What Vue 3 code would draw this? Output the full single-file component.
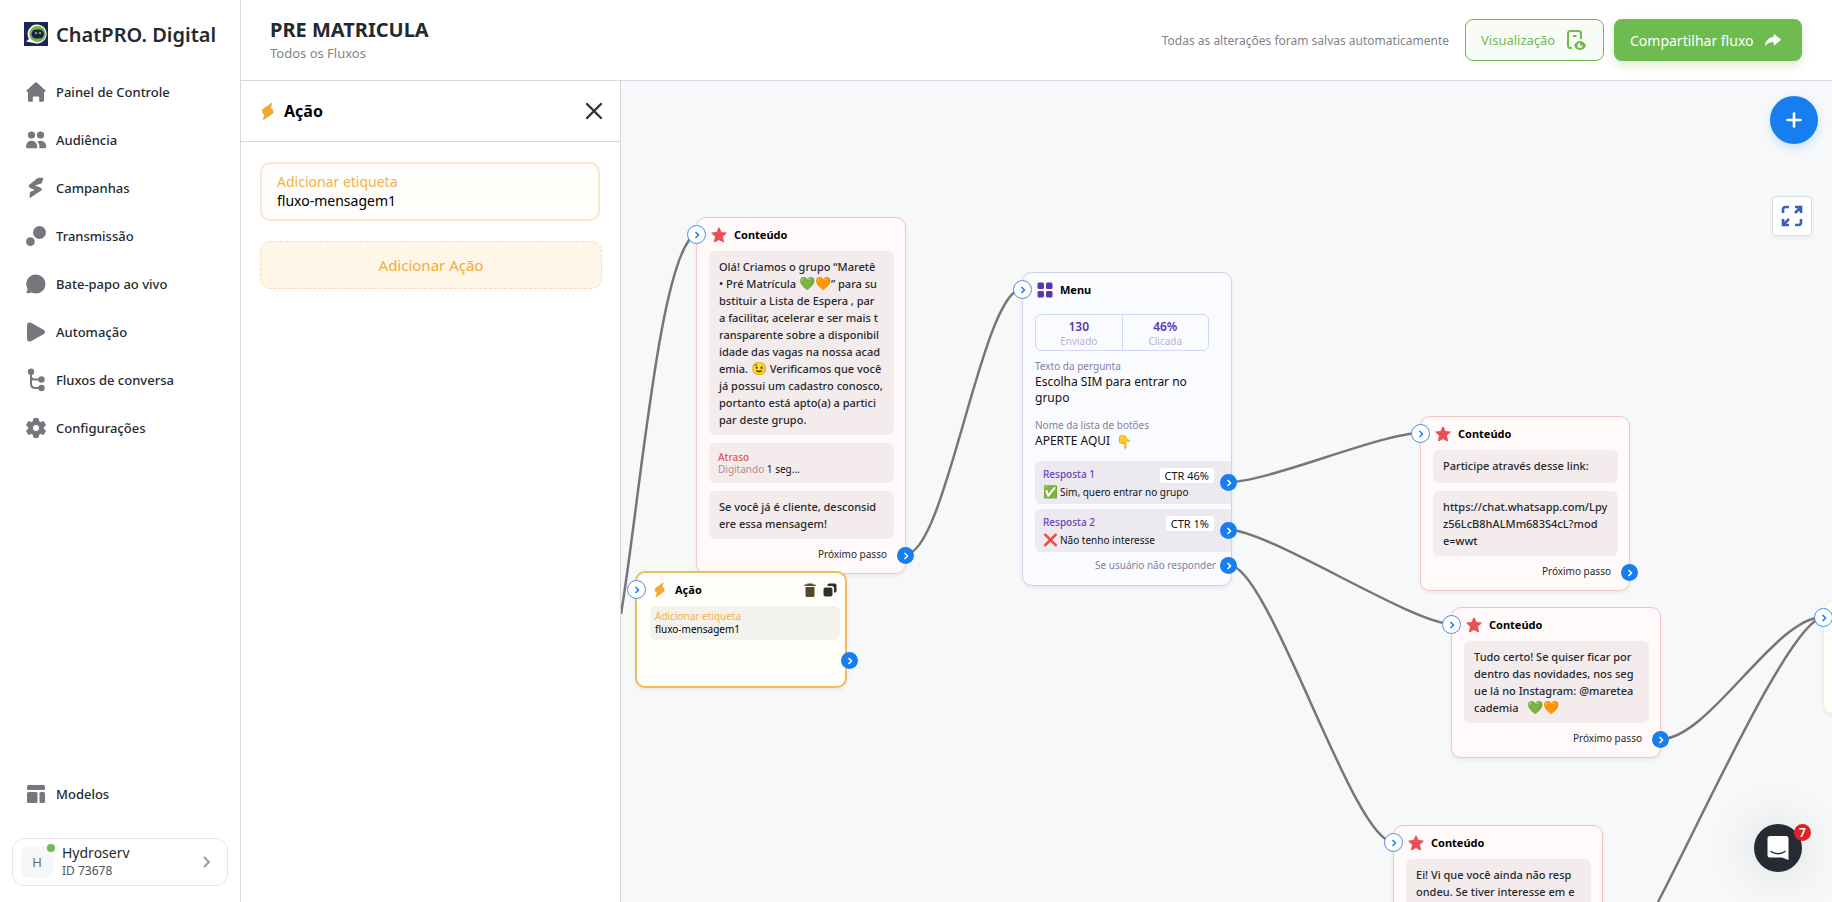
<script setup>
const nav = [
  { label: 'Painel de Controle', icon: 'home' },
  { label: 'Audiência', icon: 'people' },
  { label: 'Campanhas', icon: 'campaign' },
  { label: 'Transmissão', icon: 'broadcast' },
  { label: 'Bate-papo ao vivo', icon: 'chat' },
  { label: 'Automação', icon: 'play' },
  { label: 'Fluxos de conversa', icon: 'flow' },
  { label: 'Configurações', icon: 'gear' },
]

const contents = [
  {
    id: 'c1',
    next: true,
    blocks: [
      {
        text:
          'Olá! Criamos o grupo “Maretê\n• Pré Matrícula 💚🧡” para su\nbstituir a Lista de Espera , par\na facilitar, acelerar e ser mais t\nransparente sobre a disponibil\nidade das vagas na nossa acad\nemia. 😉 Verificamos que você\njá possui um cadastro conosco,\nportanto está apto(a) a partici\npar deste grupo.',
      },
      { delay: '1 seg...' },
      { text: 'Se você já é cliente, desconsid\nere essa mensagem!' },
    ],
  },
  {
    id: 'c2',
    next: true,
    blocks: [
      { text: 'Participe através desse link:' },
      { text: 'https://chat.whatsapp.com/Lpy\nz56LcB8hALMm683S4cL?mod\ne=wwt' },
    ],
  },
  {
    id: 'c3',
    next: true,
    blocks: [
      { text: 'Tudo certo! Se quiser ficar por\ndentro das novidades, nos seg\nue lá no Instagram: @maretea\ncademia   💚🧡' },
    ],
  },
  {
    id: 'c4',
    next: false,
    blocks: [
      { text: 'Ei! Vi que você ainda não resp\nondeu. Se tiver interesse em e' },
    ],
  },
]

// Splits a line so that emoji runs can be set larger than the words.
const parts = (line) =>
  line
    .split(/((?:💚|🧡|😉)+)/u)
    .map((t, i) => ({ t, emoji: i % 2 === 1 }))
    .filter((p) => p.t)

const answers = [
  { label: 'Resposta 1', mark: '✅', text: 'Sim, quero entrar no grupo', ctr: 'CTR 46%' },
  { label: 'Resposta 2', mark: '❌', text: 'Não tenho interesse', ctr: 'CTR 1%' },
]

const edges = [
  'M0 533 C19 419 39 169 75 153',
  'M285 473 C325 473 361 208 401 208',
  'M608 401 C648 401 760 352 800 352',
  'M608 449 C648 449 791 543 831 543',
  'M608 484 C648 484 732 761 772 761',
  'M1040 658 C1088 658 1154 536 1202 536',
  'M1037 821 C1084 731 1169 541 1202 536',
]
</script>

<template>
  <div class="app">
    <aside class="sidebar">
      <div class="brand">
        <svg class="logo" viewBox="0 0 24 24" aria-hidden="true">
          <rect width="24" height="24" fill="#1f2457" />
          <path d="M2 19.500L5 17A9.500 9.500 0 1 1 10 21Z" fill="#fff" />
          <circle cx="13.500" cy="12" r="8.200" fill="#76b947" />
          <rect x="7.500" y="7.500" width="12.500" height="9" rx="4.500" fill="#1b2150" />
          <circle cx="12" cy="11" r="1.200" fill="#76b947" />
          <circle cx="16" cy="11" r="1.200" fill="#76b947" />
        </svg>
        <span>ChatPRO. Digital</span>
      </div>
      <nav class="nav">
        <a v-for="n in nav" :key="n.icon" href="#" class="nav-item">
          <svg class="nav-icon" viewBox="0 0 24 24" aria-hidden="true">
            <path v-if="n.icon === 'home'" d="M12 2.300c.6 0 1 .2 1.400.6l7.800 7.300c.7.700.3 1.800-.7 1.800H20v8.300c0 .9-.6 1.500-1.500 1.500h-3.300v-4.300c0-.7-.4-1-1-1H9.800c-.6 0-1 .3-1 1v4.300H5.500c-.9 0-1.500-.6-1.500-1.500V12h-.5c-1 0-1.400-1.100-.7-1.800l7.800-7.300c.4-.4.800-.6 1.400-.6z" />
            <g v-else-if="n.icon === 'people'">
              <circle cx="7.500" cy="7" r="3.600" /><circle cx="16.500" cy="7" r="3.600" />
              <path d="M2 19c0-3.800 2.200-6.200 5.500-6.200s5.700 2.400 5.700 6.200c0 .8-.4 1.200-1.200 1.200H3.200c-.8 0-1.200-.4-1.200-1.200z" />
              <path d="M13.200 13.700c.9-.6 2-.9 3.200-.9 3.400 0 5.900 2.400 5.900 6.200 0 .8-.4 1.200-1.200 1.200h-5.700c.5-2.900-.4-5.100-2.200-6.500z" />
            </g>
            <path v-else-if="n.icon === 'campaign'" d="M19.500 1.800l-1.700 5.400-6.800 2.300 6 2.500c1 .5 1.100 1.700.3 2.500L5.500 22.200l.4-6.200 4.800-2-4.800-2.200c-1.300-.7-1.500-2.400-.3-3.400L13 2.500c.6-.5 1.200-.7 2-.7z" />
            <g v-else-if="n.icon === 'broadcast'"><circle cx="15.500" cy="8.500" r="6.500" /><circle cx="6.400" cy="17.600" r="4.400" /></g>
            <path v-else-if="n.icon === 'chat'" d="M12 2.500a9.500 9.500 0 1 1 0 19c-1.600 0-3-.4-4.300-1.100-1.500.5-3 .9-4.500.8-.7 0-.9-.6-.6-1.100.6-1.200.9-2.300.9-3.500A9.500 9.500 0 0 1 12 2.500z" />
            <path v-else-if="n.icon === 'play'" d="M3 5.200C3 3 5 1.800 7 2.800l12.600 7c1.900 1.100 1.900 3.300 0 4.400L7 21.200c-2 1-4-.2-4-2.400z" />
            <g v-else-if="n.icon === 'flow'">
              <circle cx="7" cy="3.800" r="3.200" /><circle cx="17.500" cy="11.500" r="3.200" /><circle cx="17.500" cy="20" r="3.200" />
              <path d="M7 4v11.500c0 3 1.500 4.500 4.500 4.500H17M7 9c.3 1.800 1.500 2.500 3.500 2.500H17" fill="none" stroke="currentColor" stroke-width="2" />
            </g>
            <path v-else fill-rule="evenodd" d="M10 2.500h4l.8 3 1.700 1 3-.9 2 3.500-2.200 2.200v1.400l2.200 2.200-2 3.500-3-.9-1.700 1-.8 3h-4l-.8-3-1.700-1-3 .9-2-3.500 2.200-2.200v-1.400L2.500 9.100l2-3.500 3 .9 1.700-1zM12 8.400a3.600 3.600 0 1 0 0 7.200 3.600 3.600 0 0 0 0-7.200z" stroke="currentColor" stroke-width="1" stroke-linejoin="round" />
          </svg>
          <span>{{ n.label }}</span>
        </a>
      </nav>
      <a href="#" class="nav-item templates">
        <svg class="nav-icon" viewBox="0 0 24 24" aria-hidden="true">
          <rect x="3" y="3" width="18" height="5" rx="1.500" /><rect x="3" y="10" width="10.500" height="11" rx="1.500" /><rect x="15.500" y="10" width="5.500" height="11" rx="1.500" />
        </svg>
        <span>Modelos</span>
      </a>
      <button class="account" type="button">
        <span class="avatar">H<i class="online"></i></span>
        <span class="who"><b>Hydroserv</b><small>ID 73678</small></span>
        <svg class="chev" viewBox="0 0 10 14" aria-hidden="true"><path d="M2 2l5 5-5 5" fill="none" stroke="#999ca0" stroke-width="2" /></svg>
      </button>
    </aside>

    <div class="main">
      <header class="topbar">
        <div class="titles">
          <h1>PRE MATRICULA</h1>
          <a href="#">Todos os Fluxos</a>
        </div>
        <span class="saved">Todas as alterações foram salvas automaticamente</span>
        <button class="btn preview" type="button">
          Visualização
          <svg viewBox="0 0 24 24" aria-hidden="true">
            <path d="M8 20H6.500A2.500 2.500 0 0 1 4 17.500v-12A2.500 2.500 0 0 1 6.500 3h8A2.500 2.500 0 0 1 17 5.500V11M9 8h3.500" fill="none" stroke="currentColor" stroke-width="2" />
            <path fill-rule="evenodd" d="M10 17.500c1.300-3 3.400-4.500 6-4.500s4.700 1.500 6 4.500c-1.300 3-3.400 4.500-6 4.500s-4.700-1.500-6-4.500zM16 15a2.500 2.500 0 1 0 2.500 2.500H16z" />
          </svg>
        </button>
        <button class="btn share" type="button">
          Compartilhar fluxo
          <svg viewBox="0 0 24 24" aria-hidden="true"><path d="M13 3.500l10 8-10 8v-5C8 14.500 4 16 1.500 20.500 2 13 6 8.500 13 8z" /></svg>
        </button>
      </header>

      <div class="work">
        <section class="panel">
          <div class="panel-head">
            <svg class="bolt" viewBox="0 0 14 20" aria-hidden="true"><path d="M11.500 1L1.500 8.200l.6 3.800 2 .8L2.500 19l10.500-7.500-.6-4-2.300-.9z" stroke="#f2a933" stroke-width="1" stroke-linejoin="round" /></svg>
            <h2>Ação</h2>
            <button class="close" type="button" aria-label="Fechar">
              <svg viewBox="0 0 18 18" aria-hidden="true"><path d="M2 2l14 14M16 2L2 16" stroke="#303438" stroke-width="2.400" stroke-linecap="round" /></svg>
            </button>
          </div>
          <div class="panel-body">
            <button class="tag-card" type="button">
              <span class="tag-label">Adicionar etiqueta</span>
              <span class="tag-value">fluxo-mensagem1</span>
            </button>
            <button class="add-action" type="button">Adicionar Ação</button>
          </div>
        </section>

        <section class="canvas">
          <svg class="edges" aria-hidden="true"><path v-for="e in edges" :key="e" :d="e" /></svg>

          <article v-for="c in contents" :key="c.id" class="node content" :class="c.id">
            <span class="port in"><svg viewBox="0 0 8 8"><path d="M2.500 1L5.500 4l-3 3" /></svg></span>
            <h3>
              <svg class="star" viewBox="0 0 16 16" aria-hidden="true"><path d="M8 .8l2.200 4.700 5.100.6-3.800 3.500 1 5.400L8 12.500 3.500 15l1-5.400L.7 6.100l5.100-.6z" stroke="#e84f55" stroke-width="1" stroke-linejoin="round" /></svg>
              Conteúdo
            </h3>
            <template v-for="(b, i) in c.blocks" :key="i">
              <div v-if="b.delay" class="bubble delay">
                <span class="delay-name">Atraso</span>
                <span><em>Digitando</em> {{ b.delay }}</span>
              </div>
              <div v-else class="bubble">
                <p v-for="(line, j) in b.text.split('\n')" :key="j" class="line"><span v-for="(p, k) in parts(line)" :key="k" :class="{ emoji: p.emoji }">{{ p.t }}</span></p>
              </div>
            </template>
            <div v-if="c.next" class="next">
              Próximo passo
              <span class="port out"><svg viewBox="0 0 8 8"><path d="M2.500 1L5.500 4l-3 3" /></svg></span>
            </div>
          </article>

          <article class="node menu">
            <span class="port in"><svg viewBox="0 0 8 8"><path d="M2.500 1L5.500 4l-3 3" /></svg></span>
            <h3>
              <svg class="grid-icon" viewBox="0 0 16 16" aria-hidden="true"><rect x="0.500" y="0.500" width="6.500" height="6.500" rx="1.500" /><rect x="9" y="0.500" width="6.500" height="6.500" rx="1.500" /><rect x="0.500" y="9" width="6.500" height="6.500" rx="1.500" /><rect x="9" y="9" width="6.500" height="6.500" rx="1.500" /></svg>
              Menu
            </h3>
            <div class="stats">
              <div><b>130</b><small>Enviado</small></div>
              <div><b>46%</b><small>Clicada</small></div>
            </div>
            <div class="field"><span>Texto da pergunta</span><p>Escolha SIM para entrar no<br />grupo</p></div>
            <div class="field"><span>Nome da lista de botões</span><p class="list-name">APERTE AQUI <i class="emoji">👇</i></p></div>
            <div v-for="a in answers" :key="a.label" class="answer">
              <div class="answer-top"><b>{{ a.label }}</b><span class="ctr">{{ a.ctr }}</span></div>
              <div class="answer-text"><span class="mark">{{ a.mark }}</span>{{ a.text }}</div>
              <span class="port out"><svg viewBox="0 0 8 8"><path d="M2.500 1L5.500 4l-3 3" /></svg></span>
            </div>
            <div class="noreply">
              Se usuário não responder
              <span class="port out"><svg viewBox="0 0 8 8"><path d="M2.500 1L5.500 4l-3 3" /></svg></span>
            </div>
          </article>

          <article class="node action">
            <span class="port in"><svg viewBox="0 0 8 8"><path d="M2.500 1L5.500 4l-3 3" /></svg></span>
            <h3>
              <svg class="bolt-small" viewBox="0 0 14 20" aria-hidden="true"><path d="M11.500 1L1.500 8.200l.6 3.800 2 .8L2.500 19l10.500-7.500-.6-4-2.300-.9z" stroke="#f2a933" stroke-width="1" stroke-linejoin="round" /></svg>
              Ação
              <span class="tools">
                <button type="button" aria-label="Excluir"><svg viewBox="0 0 14 14" aria-hidden="true"><path d="M4.500 0.500h5l.5 1h2.500v1.500h-11V1.500H4zM2.500 4h9v8.500c0 .9-.6 1.500-1.500 1.500H4c-.9 0-1.500-.6-1.500-1.500z" fill="#57482c" /></svg></button>
                <button type="button" aria-label="Duplicar"><svg viewBox="0 0 14 14" aria-hidden="true"><path d="M6 0.500h6A1.500 1.500 0 0 1 13.500 2v6A1.500 1.500 0 0 1 12 9.500h-1V5.500A2.500 2.500 0 0 0 8.500 3h-4V2A1.500 1.500 0 0 1 6 .5z" fill="#2f2f2d" /><rect x="0.500" y="4.500" width="9" height="9" rx="2" fill="#2f2f2d" /></svg></button>
              </span>
            </h3>
            <div class="action-body"><span>Adicionar etiqueta</span><span>fluxo-mensagem1</span></div>
            <span class="port out"><svg viewBox="0 0 8 8"><path d="M2.500 1L5.500 4l-3 3" /></svg></span>
          </article>

          <article class="node next-action">
            <span class="port in"><svg viewBox="0 0 8 8"><path d="M2.500 1L5.500 4l-3 3" /></svg></span>
          </article>

          <button class="fab" type="button" aria-label="Adicionar">
            <svg viewBox="0 0 16 16" aria-hidden="true"><path d="M8 1.500v13M1.500 8h13" stroke="#fff" stroke-width="2.600" stroke-linecap="round" /></svg>
          </button>
          <button class="fit" type="button" aria-label="Ajustar à tela">
            <svg viewBox="0 0 22 22" aria-hidden="true"><path d="M2 8V4.500A2.500 2.500 0 0 1 4.500 2H8M14 2h6v6M20 2l-6 6M20 14v3.500a2.500 2.500 0 0 1-2.500 2.500H14M8 20H2v-6M2 20l6-6" fill="none" stroke="#3a5fb8" stroke-width="2.600" /></svg>
          </button>
          <button class="messenger" type="button" aria-label="Mensagens">
            <svg viewBox="0 0 24 26" aria-hidden="true"><path d="M4 1h16a2.500 2.500 0 0 1 2.500 2.500V25L16 22.500H4A2.500 2.500 0 0 1 1.500 20V3.500A2.500 2.500 0 0 1 4 1z" fill="#fff" /><path d="M5 16.500c4 3 10 3 14 0" fill="none" stroke="#262b33" stroke-width="1.500" stroke-linecap="round" /></svg>
            <span class="count">7</span>
          </button>
        </section>
      </div>
    </div>
  </div>
</template>

<style>
body {
  margin: 0;
  overflow: hidden;
}
</style>

<style scoped>
* {
  box-sizing: border-box;
}
.app {
  display: flex;
  height: 100vh;
  font-family: "Noto Sans", "Open Sans", sans-serif;
  font-size: 13px;
  color: #25292e;
  background: #fff;
}
button {
  font: inherit;
  color: inherit;
  border: 0;
  padding: 0;
  background: none;
  cursor: pointer;
}
a {
  color: inherit;
  text-decoration: none;
}
svg {
  fill: currentColor;
  flex: none;
  display: block;
}
h1,
h2,
h3,
p {
  margin: 0;
}
.sidebar {
  display: flex;
  flex-direction: column;
  flex: none;
  width: 241px;
  border-right: 1px solid #d5d8de;
  padding-bottom: 16px;
}
.brand {
  display: flex;
  align-items: center;
  gap: 8px;
  height: 68px;
  padding: 0 24px;
  font-size: 20px;
  font-weight: 600;
  white-space: nowrap;
}
.logo {
  width: 24px;
  height: 24px;
}
.nav {
  flex: 1;
}
.nav-item {
  display: flex;
  align-items: center;
  gap: 8px;
  height: 48px;
  padding: 0 24px;
  font-weight: 500;
}
.nav-icon {
  width: 24px;
  height: 24px;
  color: #75777d;
}
.templates {
  margin-bottom: 20px;
}
.account {
  display: flex;
  align-items: center;
  gap: 9px;
  height: 48px;
  margin: 0 12px;
  padding: 0 15px 0 8px;
  border: 1px solid #e4e6e8;
  border-radius: 12px;
  text-align: left;
}
.avatar {
  position: relative;
  display: grid;
  place-items: center;
  width: 32px;
  height: 32px;
  border-radius: 8px;
  background: #f6f8f8;
  color: #6a6d70;
}
.online {
  position: absolute;
  top: -2px;
  right: -2px;
  width: 8px;
  height: 8px;
  border-radius: 50%;
  background: #6dbb51;
}
.who {
  display: flex;
  flex-direction: column;
  flex: 1;
  line-height: 18px;
}
.who b {
  font-weight: 400;
  font-size: 14px;
}
.who small {
  font-size: 12px;
  color: #4f5357;
}
.chev {
  width: 10px;
  height: 14px;
}
.main {
  display: flex;
  flex-direction: column;
  flex: 1;
  min-width: 0;
}
.topbar {
  display: flex;
  align-items: center;
  flex: none;
  height: 81px;
  padding: 0 30px 0 29px;
  border-bottom: 1px solid #d5d8de;
}
.titles {
  flex: 1;
}
h1 {
  font-size: 20px;
  line-height: 26px;
  font-weight: 700;
}
.titles a {
  display: block;
  font-size: 13px;
  line-height: 20px;
  color: #808488;
}
.saved {
  margin-right: 16px;
  font-size: 12px;
  color: #808488;
}
.btn {
  display: flex;
  align-items: center;
  justify-content: space-between;
  height: 42px;
  padding: 0 15px;
  border-radius: 8px;
  font-size: 14px;
}
.btn svg {
  width: 24px;
  height: 24px;
}
.preview {
  width: 139px;
  margin-right: 10px;
  border: 1px solid #6dbb51;
  background: #f9fcf6;
  color: #6dbb51;
  font-size: 13px;
}
.share {
  width: 188px;
  padding: 0 20px 0 16px;
  background: #6dbb51;
  color: #fff;
  box-shadow: 0 4px 8px #6dbb5140;
}
.share svg {
  width: 18px;
  height: 18px;
}
.work {
  display: flex;
  flex: 1;
  min-height: 0;
}
.panel {
  flex: none;
  width: 380px;
  border-right: 1px solid #d5d8de;
}
.panel-head {
  display: flex;
  align-items: center;
  height: 61px;
  padding: 0 17px 0 20px;
  border-bottom: 1px solid #d5d8de;
}
.bolt {
  width: 13px;
  height: 19px;
  color: #f2a933;
}
h2 {
  flex: 1;
  margin-left: 10px;
  font-size: 16px;
  line-height: 20px;
  font-weight: 700;
  color: #000;
}
.close svg {
  width: 18px;
  height: 18px;
}
.panel-body {
  display: flex;
  flex-direction: column;
  gap: 20px;
  padding: 20px 18px 0 19px;
}
.tag-card {
  display: flex;
  flex-direction: column;
  margin-right: 2px;
  padding: 8px 15px 9px;
  border: 2px solid #fae6c8;
  border-radius: 10px;
  background: #fffdfa;
  font-size: 14px;
  line-height: 19px;
  text-align: left;
}
.tag-label {
  color: #f0b24c;
}
.tag-value {
  color: #000;
}
.add-action {
  height: 48px;
  border: 1px dashed #f8dcb2;
  border-radius: 10px;
  background: #fff6ea;
  color: #f2ab38;
  font-size: 15px;
}
.canvas {
  position: relative;
  flex: 1;
  min-width: 0;
  overflow: hidden;
  background: #f6f8fa;
}
.edges {
  position: absolute;
  inset: 0;
  width: 100%;
  height: 100%;
}
.edges path {
  fill: none;
  stroke: #757679;
  stroke-width: 2.5;
}
.node {
  position: absolute;
  width: 210px;
  border-radius: 10px;
  border: 1px solid #f4c4c6;
  box-shadow: 0 2px 4px #00000010;
  font-size: 11px;
}
.content {
  padding: 0 11px 10px 12px;
  background: #fffaf9;
}
.c1 {
  left: 75px;
  top: 136px;
}
.c2 {
  left: 799px;
  top: 335px;
}
.c3 {
  left: 830px;
  top: 526px;
}
.c4 {
  left: 772px;
  top: 744px;
}
h3 {
  display: flex;
  align-items: center;
  gap: 7px;
  height: 33px;
  font-size: 11px;
  font-weight: 700;
  color: #000;
}
.star {
  width: 16px;
  height: 16px;
  margin-left: 2px;
  color: #e84f55;
}
.bubble {
  min-height: 33px;
  margin-bottom: 8px;
  padding: 7px 10px;
  border-radius: 6px;
  background: #f4ecec;
  line-height: 17px;
  font-weight: 500;
}
.line {
  display: flex;
  align-items: center;
  height: 17px;
  white-space: pre;
}
.emoji {
  font-size: 13px;
  font-style: normal;
  line-height: 1;
}
.delay {
  display: flex;
  flex-direction: column;
  padding: 8px 9px;
  font-size: 10px;
  line-height: 12px;
  font-weight: 400;
  color: #111;
}
.delay-name {
  color: #e5545a;
  font-weight: 500;
}
.delay em {
  font-style: normal;
  color: #b58d90;
}
.next {
  position: relative;
  height: 16px;
  padding-right: 7px;
  font-size: 10px;
  line-height: 14px;
  text-align: right;
}
.port {
  position: absolute;
  display: grid;
  place-items: center;
  border-radius: 50%;
}
.port svg {
  width: 8px;
  height: 8px;
  fill: none;
  stroke: currentColor;
  stroke-width: 1.500;
}
.in {
  left: -10px;
  top: 7px;
  width: 19px;
  height: 19px;
  border: 1px solid #4a90e8;
  background: #fff;
  color: #177ef0;
}
.out {
  right: -20px;
  top: 0;
  width: 17px;
  height: 17px;
  background: #177ef0;
  color: #fff;
}
.menu {
  left: 401px;
  top: 191px;
  padding: 0 0 11px 12px;
  border-color: #d4d0ea;
  background: #fafbff;
}
.grid-icon {
  width: 16px;
  height: 16px;
  margin-left: 2px;
  color: #5a35b0;
}
.stats {
  display: flex;
  margin: 8px 22px 8px 0;
  border: 1px solid #d3d8f5;
  border-radius: 6px;
}
.stats div {
  display: flex;
  flex: 1;
  flex-direction: column;
  align-items: center;
  height: 35px;
  padding-top: 4px;
}
.stats div + div {
  border-left: 1px solid #d3d8f5;
}
.stats b {
  font-size: 12px;
  line-height: 16px;
  font-weight: 600;
  color: #5a35b0;
}
.stats small {
  font-size: 10px;
  line-height: 12px;
  color: #bdaee0;
}
.field {
  margin-bottom: 12px;
}
.field span {
  display: block;
  font-size: 10px;
  line-height: 14px;
  color: #857fa0;
}
.field p {
  padding-top: 1px;
  font-size: 12px;
  line-height: 16px;
  color: #111;
}
.field .list-name {
  display: flex;
  align-items: center;
  gap: 6px;
}
.answer {
  position: relative;
  height: 43px;
  margin-bottom: 5px;
  padding: 7px 17px 0 8px;
  border-radius: 6px 0 0 6px;
  background: #eceaf0;
  color: #111;
}
.answer-top {
  display: flex;
  justify-content: space-between;
  font-size: 10px;
}
.answer-top b {
  line-height: 12px;
  font-weight: 500;
  color: #6a45bd;
}
.ctr {
  padding: 0 5px;
  border-radius: 3px;
  background: #fff;
  font-size: 11px;
  line-height: 15px;
}
.answer-text {
  display: flex;
  gap: 2px;
  font-size: 10px;
  line-height: 18px;
}
.mark {
  font-size: 12px;
}
.menu .out {
  right: -6px;
  top: 13px;
}
.noreply {
  position: relative;
  padding-right: 15px;
  font-size: 10px;
  line-height: 17px;
  text-align: right;
  color: #857fa0;
}
.menu .noreply .out {
  top: 0;
}
.action {
  left: 14px;
  top: 490px;
  width: 212px;
  height: 117px;
  padding: 0 5px 0 13px;
  border: 2px solid #f0bb58;
  background: #fffefa;
}
.action h3 {
  gap: 10px;
}
.action .out {
  top: 79px;
  right: -13px;
}
.bolt-small {
  width: 11px;
  height: 16px;
  margin-left: 4px;
  color: #f2a933;
}
.tools {
  display: flex;
  gap: 6px;
  margin-left: auto;
  margin-right: 3px;
}
.tools svg {
  width: 14px;
  height: 14px;
}
.action-body {
  display: flex;
  flex-direction: column;
  padding: 4px 5px;
  border-radius: 6px;
  background: #f4f2ec;
  font-size: 10px;
  line-height: 13px;
  color: #000;
}
.action-body span:first-child {
  color: #f0b24c;
}
.next-action {
  left: 1202px;
  top: 519px;
  height: 114px;
  border-color: #f8ecd6;
  background: #fffdf8;
}
.fab,
.fit,
.messenger {
  position: absolute;
  display: grid;
  place-items: center;
}
.fab {
  top: 15px;
  right: 14px;
  width: 48px;
  height: 48px;
  border-radius: 50%;
  background: #177ef0;
  box-shadow: 0 4px 8px #177ef030;
}
.fab svg {
  width: 16px;
  height: 16px;
}
.fit {
  top: 115px;
  right: 20px;
  width: 40px;
  height: 40px;
  border: 1px solid #d8dbe0;
  border-radius: 4px;
  background: #fff;
  box-shadow: 0 2px 4px #00000010;
}
.fit svg {
  width: 22px;
  height: 22px;
}
.messenger {
  right: 30px;
  bottom: 30px;
  width: 48px;
  height: 48px;
  border-radius: 50%;
  background: #262b33;
  box-shadow: 0 2px 50px #00000026;
}
.messenger svg {
  width: 24px;
  height: 26px;
}
.count {
  position: absolute;
  top: 0;
  right: -9px;
  width: 17px;
  height: 17px;
  border-radius: 50%;
  background: #dc2127;
  color: #fff;
  font-size: 12px;
  line-height: 17px;
  font-weight: 600;
}
</style>
